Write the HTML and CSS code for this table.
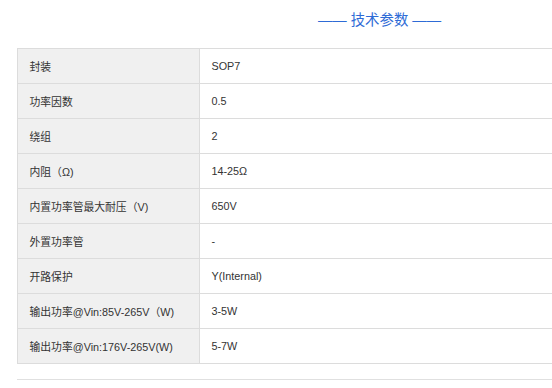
FILE: index.html
```html
<!DOCTYPE html>
<html lang="zh">
<head>
<meta charset="utf-8">
<title>技术参数</title>
<link rel="stylesheet" href="styles.css">
</head>
<body>
<div class="page">
  <h2 class="title">—— 技术参数 ——</h2>
  <table class="spec">
    <tr><td class="k">封装</td><td class="v">SOP7</td></tr>
    <tr><td class="k">功率因数</td><td class="v">0.5</td></tr>
    <tr><td class="k">绕组</td><td class="v">2</td></tr>
    <tr><td class="k">内阻（Ω)</td><td class="v">14-25Ω</td></tr>
    <tr><td class="k">内置功率管最大耐压（V)</td><td class="v">650V</td></tr>
    <tr><td class="k">外置功率管</td><td class="v">-</td></tr>
    <tr><td class="k">开路保护</td><td class="v">Y(Internal)</td></tr>
    <tr><td class="k">输出功率@Vin:85V-265V（W)</td><td class="v">3-5W</td></tr>
    <tr><td class="k">输出功率@Vin:176V-265V(W)</td><td class="v">5-7W</td></tr>
  </table>
  <div class="rule"></div>
</div>
</body>
</html>
```

FILE: styles.css
```css
html, body {
  margin: 0;
  padding: 0;
  background: #fff;
  overflow: hidden;
}
body {
  font-family: "Liberation Sans", "Noto Sans CJK SC", sans-serif;
  font-size: 10.8px;
  color: #333;
}
.page {
  padding-left: 17px;
}
.title {
  margin: 0;
  padding-left: 190px;
  height: 48px;
  line-height: 41px;
  font-size: 14.4px;
  font-weight: normal;
  color: #2e6bd6;
  text-align: center;
  white-space: nowrap;
}
.spec {
  width: 100%;
  border-collapse: collapse;
  table-layout: fixed;
}
.spec td {
  border: 1px solid #dcdcdc;
  height: 35px;
  padding: 0 11px 0 11.5px;
  box-sizing: border-box;
  vertical-align: middle;
  white-space: nowrap;
}
.spec .k {
  width: 182px;
  background: #f0f0f0;
}
.spec .v {
  background: #fff;
  border-right: none;
}
.rule {
  margin-top: 15px;
  border-top: 1px solid #e0e0e0;
}
```
